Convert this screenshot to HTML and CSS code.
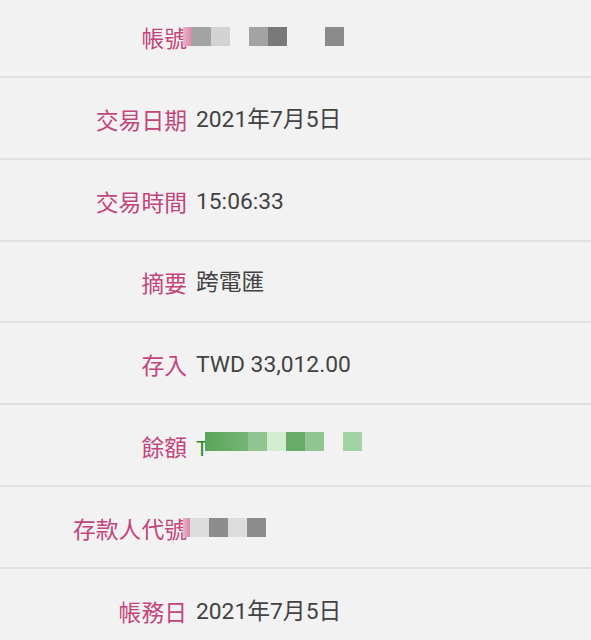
FILE: index.html
```html
<!DOCTYPE html>
<html lang="zh-Hant">
<head>
<meta charset="utf-8">
<link rel="stylesheet" href="styles.css">
</head>
<body>
<div class="list">
  <div class="row">
    <div class="label">帳號</div>
    <div class="value">
      <div class="mosaic m-acct">
        <span class="blk w9 pink"></span>
        <span class="blk g1"></span>
        <span class="blk g2"></span>
        <span class="blk blank"></span>
        <span class="blk g1"></span>
        <span class="blk g3"></span>
        <span class="blk blank"></span>
        <span class="blk blank"></span>
        <span class="blk g4"></span>
      </div>
    </div>
  </div>
  <div class="row">
    <div class="label">交易日期</div>
    <div class="value">2021年7月5日</div>
  </div>
  <div class="row">
    <div class="label">交易時間</div>
    <div class="value">15:06:33</div>
  </div>
  <div class="row">
    <div class="label">摘要</div>
    <div class="value">跨電匯</div>
  </div>
  <div class="row">
    <div class="label">存入</div>
    <div class="value">TWD 33,012.00</div>
  </div>
  <div class="row">
    <div class="label">餘額</div>
    <div class="value">
      <span class="tchar">T</span>
      <div class="mosaic m-bal">
        <span class="blk gr0"></span>
        <span class="blk gr1"></span>
        <span class="blk gr2"></span>
        <span class="blk gr3"></span>
        <span class="blk gr4"></span>
        <span class="blk gr5"></span>
        <span class="blk gr6"></span>
      </div>
    </div>
  </div>
  <div class="row">
    <div class="label">存款人代號</div>
    <div class="value">
      <div class="mosaic m-dep">
        <span class="blk w7 pink"></span>
        <span class="blk l1"></span>
        <span class="blk d1"></span>
        <span class="blk l1"></span>
        <span class="blk d1"></span>
      </div>
    </div>
  </div>
  <div class="row last">
    <div class="label">帳務日</div>
    <div class="value">2021年7月5日</div>
  </div>
</div>
</body>
</html>
```

FILE: styles.css
```css
html, body {
  margin: 0;
  padding: 0;
  background: #f2f2f2;
}
body {
  width: 591px;
  height: 640px;
  overflow: hidden;
}
.list {
  margin-top: -3.8px;
}
.row {
  box-sizing: border-box;
  height: 81.8px;
  border-bottom: 2px solid #e1e1e1;
  display: grid;
  grid-template-columns: 187px 1fr;
  column-gap: 9px;
  align-items: center;
  padding-top: 4px;
}
.row.last {
  border-bottom: none;
}
.label {
  text-align: right;
  color: #c2457c;
  font-family: "Noto Sans CJK TC", sans-serif;
  font-size: 22.8px;
  line-height: 30px;
  white-space: nowrap;
}
.value {
  display: flex;
  align-items: center;
  color: #424242;
  font-family: Roboto, "Noto Sans CJK TC", sans-serif;
  font-size: 22.8px;
  line-height: 30px;
  white-space: nowrap;
}
.mosaic {
  display: flex;
  height: 19px;
}
.blk {
  display: block;
  width: 19px;
  height: 19px;
}
.blk.w9 { width: 9px; }
.blk.w7 { width: 7px; }
.m-acct { margin-left: -13px; margin-top: -3px; }
.m-dep { margin-left: -13px; margin-top: -3px; }
.pink { background: linear-gradient(to right, #e8b4c8, #d68aa8); }
.blank { background: transparent; }
.g1 { background: #a3a3a3; }
.g2 { background: #d3d3d3; }
.g3 { background: #797979; }
.g4 { background: #8b8b8b; }
.l1 { background: #dcdcdc; }
.d1 { background: #8d8d8d; }
.tchar {
  color: #2a8a2a;
  font-size: 20px;
  line-height: 22px;
  margin-top: 4px;
}
.m-bal { margin-top: -12px; margin-left: -3px; }
.gr0 { width: 43px; background: linear-gradient(to right, #5aa45a, #75b575); }
.gr1 { background: #92c592; }
.gr2 { background: #d2edd2; }
.gr3 { background: #68aa68; }
.gr4 { background: #90c490; }
.gr5 { background: transparent; }
.gr6 { background: #a2d3a2; }
```
